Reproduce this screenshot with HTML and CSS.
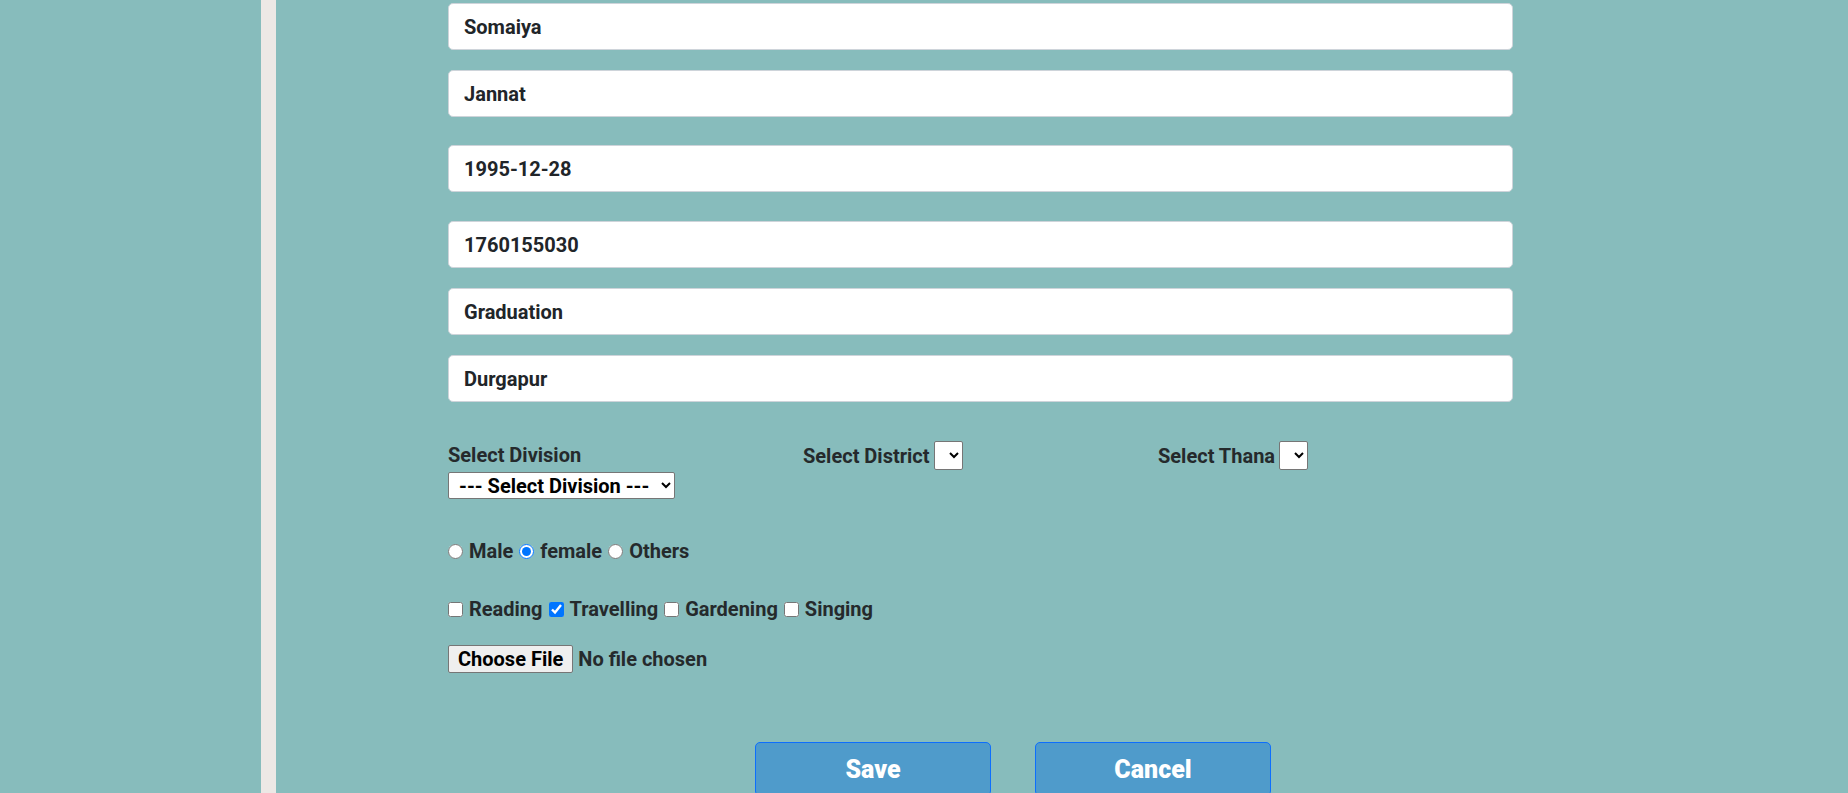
FILE: index.html
```html
<!DOCTYPE html>
<html lang="en">
<head>
<meta charset="utf-8">
<title>Profile form</title>
<link rel="stylesheet" href="styles.css">
</head>
<body>
<div class="page">
  <div class="left-gutter"></div>
  <div class="stripe"></div>
  <main class="main">
    <form class="form">
      <input class="field" type="text" value="Somaiya">
      <input class="field gap-20" type="text" value="Jannat">
      <input class="field gap-28" type="text" value="1995-12-28">
      <input class="field gap-29" type="text" value="1760155030">
      <input class="field gap-20" type="text" value="Graduation">
      <input class="field gap-20" type="text" value="Durgapur">

      <div class="location">
        <div class="loc-col loc-stack">
          <label class="loc-label">Select Division</label>
          <select class="sel-division"><option>--- Select Division ---</option></select>
        </div>
        <div class="loc-col loc-inline">
          <label class="loc-label">Select District</label>
          <select class="sel-empty"></select>
        </div>
        <div class="loc-col loc-inline">
          <label class="loc-label">Select Thana</label>
          <select class="sel-empty"></select>
        </div>
      </div>

      <div class="choice-row radios">
        <label class="opt"><input type="radio" name="g">Male</label>
        <label class="opt"><input type="radio" name="g" checked>female</label>
        <label class="opt"><input type="radio" name="g">Others</label>
      </div>

      <div class="choice-row checks">
        <label class="opt"><input type="checkbox">Reading</label>
        <label class="opt"><input type="checkbox" checked>Travelling</label>
        <label class="opt"><input type="checkbox">Gardening</label>
        <label class="opt"><input type="checkbox">Singing</label>
      </div>

      <div class="file-row">
        <input class="file" type="file">
      </div>

      <div class="actions">
        <button type="button" class="btn">Save</button>
        <button type="button" class="btn">Cancel</button>
      </div>
    </form>
  </main>
</div>
</body>
</html>
```

FILE: styles.css
```css
html, body {
  margin: 0;
  padding: 0;
  height: 100%;
  overflow: hidden;
}

body {
  background: #87bcbc;
  font-family: Roboto, "Liberation Sans", Arial, sans-serif;
  font-weight: 700;
  font-size: 20px;
  color: #252a2c;
}

.page {
  display: flex;
  min-height: 100%;
}

.left-gutter {
  width: 261px;
  flex: none;
}

.stripe {
  width: 15px;
  flex: none;
  background: #ece8e5;
}

.main {
  flex: 1;
  padding: 3px 0 0 172px;
}

.form {
  width: 1065px;
  display: flex;
  flex-direction: column;
  align-items: flex-start;
}

.field {
  box-sizing: border-box;
  width: 100%;
  height: 47px;
  margin: 0;
  padding: 0 15px;
  border: 1px solid #ced4da;
  border-radius: 5px;
  background: #fff;
  font-family: Roboto, "Liberation Sans", Arial, sans-serif;
  font-weight: 700;
  font-size: 20px;
  color: #212529;
  outline: none;
}

.gap-20 { margin-top: 20px; }
.gap-28 { margin-top: 28px; }
.gap-29 { margin-top: 29px; }

.location {
  margin-top: 39px;
  width: 100%;
  display: grid;
  grid-template-columns: repeat(3, 1fr);
  align-items: start;
}

.loc-label {
  line-height: 28px;
  color: #252a2c;
}

.loc-stack {
  display: flex;
  flex-direction: column;
  align-items: flex-start;
}

.loc-inline {
  display: flex;
  align-items: center;
  gap: 4px;
}

select {
  font-family: Roboto, "Liberation Sans", Arial, sans-serif;
  font-weight: 700;
  font-size: 20px;
  color: #000;
  background-color: #fff;
  border: 1px solid #767676;
  border-radius: 2px;
  margin: 0;
}

.sel-division {
  margin-top: 3px;
  width: 227px;
  height: 27px;
  padding: 0 0 0 6px;
}

.sel-empty {
  width: 29px;
  height: 29px;
  padding: 0;
}

.choice-row {
  display: flex;
  align-items: center;
  gap: 6px;
  height: 24px;
  line-height: 24px;
}

.radios { margin-top: 40px; }
.checks { margin-top: 34px; }

.opt {
  display: inline-flex;
  align-items: center;
  gap: 6px;
  color: #252a2c;
}

.opt input {
  margin: 0;
  width: 15px;
  height: 15px;
}

.file-row {
  margin-top: 24px;
  height: 28px;
}

.file {
  font-family: Roboto, "Liberation Sans", Arial, sans-serif;
  font-weight: 700;
  font-size: 20px;
  color: #252a2c;
  height: 28px;
  margin: 0;
}

.file::file-selector-button {
  font-family: Roboto, "Liberation Sans", Arial, sans-serif;
  font-weight: 700;
  font-size: 20px;
  color: #000;
  background: #efefef;
  border: 1px solid #767676;
  border-radius: 2px;
  height: 28px;
  padding: 0 9px;
  margin: 0 5px 0 0;
}

.actions {
  margin-top: 69px;
  padding-left: 307px;
  display: flex;
  gap: 44px;
}

.btn {
  box-sizing: border-box;
  width: 236px;
  height: 54px;
  background: #4f9bcb;
  border: 1px solid #0d6efd;
  border-radius: 5px;
  color: #fff;
  font-family: Roboto, "Liberation Sans", Arial, sans-serif;
  font-weight: 900;
  font-size: 25px;
  padding: 0;
}
```
